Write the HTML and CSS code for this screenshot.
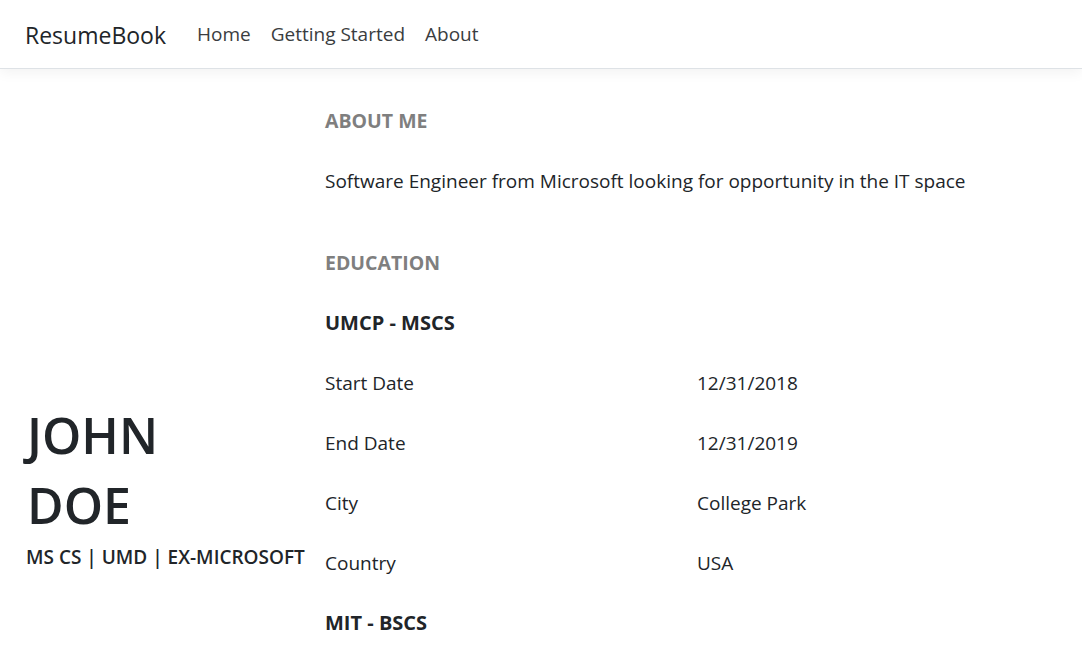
FILE: index.html
```html
<!DOCTYPE html>
<html>
<head>
<meta charset="utf-8">
<link rel="stylesheet" href="styles.css">
</head>
<body>
<nav class="navbar">
  <span class="brand">ResumeBook</span>
  <a class="nav-link" href="#">Home</a>
  <a class="nav-link" href="#">Getting Started</a>
  <a class="nav-link" href="#">About</a>
</nav>
<main class="page">
  <aside class="side">
    <h1 class="name">JOHN<br>DOE</h1>
    <div class="tagline">MS CS | UMD | EX-MICROSOFT</div>
  </aside>
  <section class="content">
    <h2 class="section-title">ABOUT ME</h2>
    <p class="about">Software Engineer from Microsoft looking for opportunity in the IT space</p>
    <h2 class="section-title edu">EDUCATION</h2>
    <h3 class="school">UMCP - MSCS</h3>
    <div class="row"><span class="cell">Start Date</span><span class="cell">12/31/2018</span></div>
    <div class="row"><span class="cell">End Date</span><span class="cell">12/31/2019</span></div>
    <div class="row"><span class="cell">City</span><span class="cell">College Park</span></div>
    <div class="row"><span class="cell">Country</span><span class="cell">USA</span></div>
    <h3 class="school">MIT - BSCS</h3>
  </section>
</main>
</body>
</html>
```
FILE: styles.css
```css
* { box-sizing: border-box; }
html, body { margin: 0; padding: 0; }
body {
  font-family: "Open Sans", "Noto Sans", sans-serif;
  color: #212529;
  background: #fff;
  font-size: 19px;
  overflow: hidden;
}
.navbar {
  height: 69px;
  display: flex;
  align-items: center;
  padding: 0 25px;
  border-bottom: 1px solid #dee2e6;
  box-shadow: 0 4px 12px rgba(0,0,0,0.05);
  position: relative;
}
.brand {
  font-size: 23px;
  color: #212529;
  margin-right: 21px;
  padding-top: 1px;
}
.nav-link {
  font-size: 19px;
  color: #3a3d40;
  text-decoration: none;
  padding: 0 10px;
}
.page {
  display: flex;
  padding: 0 0 0 25px;
}
.side {
  width: 300px;
  padding-top: 331px;
}
.name {
  font-size: 50px;
  font-weight: 600;
  line-height: 70px;
  margin: 0 0 0 2px;
}
.tagline {
  font-size: 19px;
  font-weight: 600;
  margin: 4px 0 0 1px;
}
.content {
  width: 744px;
  padding-top: 37px;
}
.section-title {
  font-size: 19.5px;
  font-weight: 700;
  color: #7f7f7f;
  margin: 0;
  height: 30px;
  line-height: 30px;
}
.about {
  margin: 30px 0 0 0;
  height: 30px;
  line-height: 30px;
}
.edu { margin-top: 52px; }
.school {
  font-size: 20px;
  font-weight: 700;
  margin: 30px 0 0 0;
  height: 30px;
  line-height: 30px;
}
.row {
  display: flex;
  margin-top: 30px;
  height: 30px;
  line-height: 30px;
}
.cell {
  flex: 1 1 0;
}
```
